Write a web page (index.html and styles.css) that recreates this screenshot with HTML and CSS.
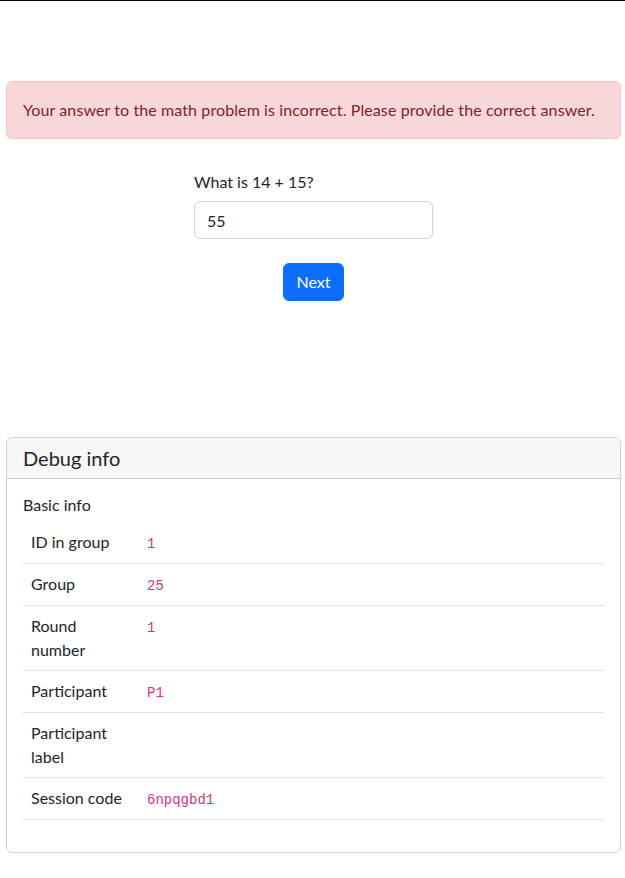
FILE: index.html
```html
<!DOCTYPE html>
<html lang="en">
<head>
<meta charset="utf-8">
<title>Page</title>
<link rel="stylesheet" href="styles.css">
</head>
<body>
<div class="topline"></div>
<main class="page">
  <div class="alert">Your answer to the math problem is incorrect. Please provide the correct answer.</div>
  <form class="question">
    <label class="q-label" for="answer">What is 14 + 15?</label>
    <input class="q-input" id="answer" type="text" value="55">
    <div class="btn-row"><button type="button" class="btn">Next</button></div>
  </form>
  <section class="card">
    <div class="card-header">Debug info</div>
    <div class="card-body">
      <div class="subtitle">Basic info</div>
      <table class="info">
        <tr><th>ID in group</th><td><code>1</code></td></tr>
        <tr><th>Group</th><td><code>25</code></td></tr>
        <tr><th>Round number</th><td><code>1</code></td></tr>
        <tr><th>Participant</th><td><code>P1</code></td></tr>
        <tr><th>Participant label</th><td></td></tr>
        <tr><th>Session code</th><td><code>6npqgbd1</code></td></tr>
      </table>
    </div>
  </section>
</main>
</body>
</html>
```
FILE: styles.css
```css
* { box-sizing: border-box; }
html, body { margin: 0; padding: 0; }
body {
  font-family: Lato, "Noto Sans", sans-serif;
  font-size: 16px;
  line-height: 1.5;
  color: #212529;
  background: #fff;
}
.topline { height: 1px; background: #000; }
.page { padding: 80px 4px 26px 6px; }
.alert {
  background: #f8d7da;
  border: 1px solid #f5c2c7;
  color: #842029;
  border-radius: 6px;
  padding: 16px;
  margin-bottom: 31px;
  letter-spacing: 0.1px;
}
.question {
  width: 239px;
  margin: 0 auto;
}
.q-label { display: block; margin-bottom: 7px; }
.q-input {
  display: block;
  width: 100%;
  height: 38px;
  padding: 6px 12px;
  font: inherit;
  color: #212529;
  border: 1px solid #ced4da;
  border-radius: 6px;
  background: #fff;
}
.btn-row { display: flex; justify-content: center; margin-top: 24px; }
.btn {
  font: inherit;
  color: #fff;
  background: #0d6efd;
  border: 1px solid #0d6efd;
  border-radius: 6px;
  padding: 6px 12px;
  height: 38px;
  line-height: 24px;
}
.card {
  margin-top: 136px;
  border: 1px solid rgba(0,0,0,.175);
  border-radius: 6px;
  overflow: hidden;
}
.card-header {
  background: #f7f7f7;
  border-bottom: 1px solid rgba(0,0,0,.175);
  padding: 8px 16px;
  font-size: 20px;
  line-height: 24px;
}
.card-body { padding: 14px 16px 16px; }
.subtitle { margin-bottom: 5px; }
.info {
  width: 100%;
  border-collapse: collapse;
  margin-bottom: 16px;
}
.info th, .info td {
  text-align: left;
  font-weight: normal;
  vertical-align: top;
  padding: 8px;
  border-bottom: 1px solid #dee2e6;
}
.info th { width: 116px; }
code {
  font-family: "Liberation Mono", monospace;
  font-size: 14px;
  color: #d63384;
}
```
